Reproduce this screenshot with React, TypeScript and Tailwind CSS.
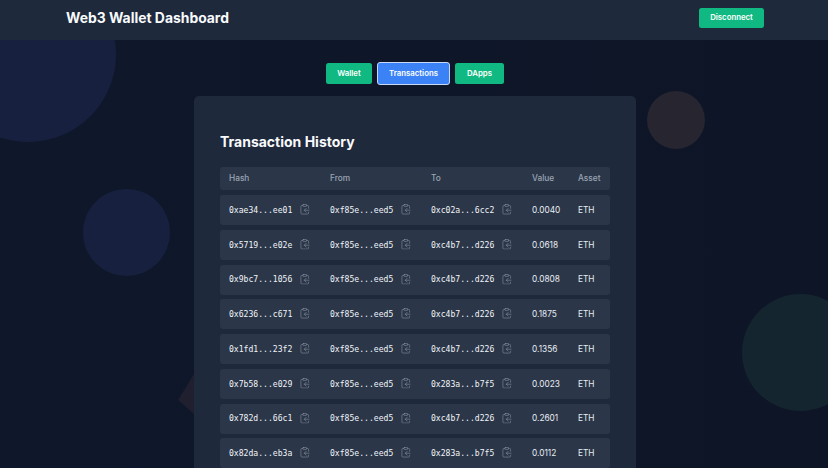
import { ClipboardCopy } from "lucide-react";

const rows = [
  ["0xae34...ee01", "0xc02a...6cc2", "0.0040"],
  ["0x5719...e02e", "0xc4b7...d226", "0.0618"],
  ["0x9bc7...1056", "0xc4b7...d226", "0.0808"],
  ["0x6236...c671", "0xc4b7...d226", "0.1875"],
  ["0x1fd1...23f2", "0xc4b7...d226", "0.1356"],
  ["0x7b58...e029", "0x283a...b7f5", "0.0023"],
  ["0x782d...66c1", "0xc4b7...d226", "0.2601"],
  ["0x82da...eb3a", "0x283a...b7f5", "0.0112"],
];

const gridCols = "grid grid-cols-[101px_101px_101px_46px_1fr] items-center pl-[9px] rounded-[3px]";

function Addr({ text }: { text: string }) {
  return (
    <div className="flex items-center gap-[6.5px]">
      <span className="font-['DejaVu_Sans_Mono',monospace] text-[8.1px] text-[#f1f5f9]">{text}</span>
      <ClipboardCopy className="w-[11.5px] h-[11.5px] text-[#8b95a5] -translate-y-[0.5px]" strokeWidth={1.2} />
    </div>
  );
}

export default function App() {
  return (
    <div className="relative h-[468px] w-[828px] overflow-hidden bg-gradient-to-r from-[#0f182a] to-[#0d1527] font-['Inter',sans-serif] text-white">
      <div className="absolute left-[-60px] top-[-34px] h-[176px] w-[176px] rounded-full bg-[#17213f]" />
      <div className="absolute left-[83px] top-[189px] h-[87px] w-[87px] rounded-full bg-[#17213f]" />
      <div className="absolute left-[647px] top-[91px] h-[58px] w-[58px] rounded-full bg-[#272530]" />
      <div className="absolute left-[742px] top-[294px] h-[117px] w-[117px] rounded-full bg-[#14252f]" />
      <svg className="absolute left-[170px] top-[365px]" width="40" height="60" viewBox="0 0 40 60">
        <polygon points="8,35 24,9 30,9 30,49 24,49" fill="#1f1f2f" />
      </svg>

      <header className="relative flex h-[40px] items-center justify-between bg-[#1e293b] pb-[4px] pl-[66px] pr-[64px]">
        <h1 className="text-[13.9px] font-bold text-[#f8fafc]">Web3 Wallet Dashboard</h1>
        <button className="flex h-[20px] w-[65px] items-center justify-center rounded-[2.5px] bg-[#10b981] text-[7.8px] font-semibold text-white">
          Disconnect
        </button>
      </header>

      <nav className="relative mt-[22px] flex items-center justify-center gap-[5px] pl-[2px]">
        <button className="flex h-[21px] w-[46px] items-center justify-center rounded-[2.5px] bg-[#10b981] text-[7.8px] font-semibold">Wallet</button>
        <button className="flex h-[23px] w-[73px] items-center justify-center rounded-[3px] border border-[#c7d8f5] bg-[#3b82f6] text-[7.8px] font-semibold">Transactions</button>
        <button className="flex h-[21px] w-[49px] items-center justify-center rounded-[2.5px] bg-[#10b981] text-[7.8px] font-semibold">DApps</button>
      </nav>

      <main className="relative ml-[194px] mt-[11px] w-[442px] rounded-t-[5px] bg-[#1e293b] px-[26px] pt-[36px]">
        <h2 className="mb-[15px] text-[14px] leading-[20px] font-bold text-[#f8fafc]">Transaction History</h2>
        <div className={`${gridCols} mb-[5px] h-[23px] bg-[#2b3648] text-[8.3px] font-medium text-[#9aa5b4]`}>
          <span>Hash</span>
          <span>From</span>
          <span>To</span>
          <span>Value</span>
          <span>Asset</span>
        </div>
        <div className="flex flex-col gap-[4.75px]">
          {rows.map((r) => (
            <div key={r[0]} className={`${gridCols} h-[30px] bg-[#2b3648]`}>
              <Addr text={r[0]} />
              <Addr text="0xf85e...eed5" />
              <Addr text={r[1]} />
              <span className="text-[8.3px] text-[#e8edf3]">{r[2]}</span>
              <span className="text-[8.3px] text-[#e8edf3]">ETH</span>
            </div>
          ))}
        </div>
      </main>
    </div>
  );
}
